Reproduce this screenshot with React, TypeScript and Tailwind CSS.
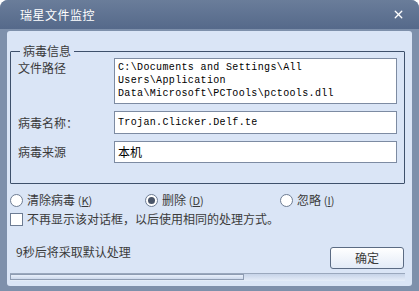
import { X } from 'lucide-react';

const cjk = { fontFamily: '"Noto Sans CJK SC", "Noto Sans", sans-serif' };
const mono = { fontFamily: '"Liberation Mono", "Noto Sans CJK SC", monospace' };

function Radio({ checked, label, hotkey }: { checked?: boolean; label: string; hotkey: string }) {
  return (
    <label className="flex items-center gap-[4px]">
      <span className="w-[13px] h-[13px] rounded-full border border-[#6d7c93] bg-white flex items-center justify-center">
        {checked && <span className="w-[7px] h-[7px] rounded-full bg-[#4a5568]" />}
      </span>
      <span className="text-[12px] leading-[16px] text-[#3b3b3b]">
        {label} <span className="text-[11px]">(<span className="underline">{hotkey}</span>)</span>
      </span>
    </label>
  );
}

export default function App() {
  return (
    <div className="w-[419px] h-[291px] bg-[#7e90ab] rounded-t-[8px] flex flex-col overflow-hidden" style={cjk}>
      {/* Title */}
      <div className="h-[29px] flex items-center justify-between pl-[20px] pr-[14px] bg-gradient-to-b from-[#6a7d9a] to-[#55698a]">
        <span className="text-white text-[12px] tracking-[0.5px]">瑞星文件监控</span>
        <X size={13} strokeWidth={2.5} className="text-white" />
      </div>

      {/* Client */}
      <div className="flex-1 mx-[7px] mb-[5px] mt-[2px] bg-[#dae5f6] rounded-[3px] px-[3px] pt-[13px] flex flex-col">
        {/* Group box */}
        <fieldset className="border border-[#3e506b] rounded-[1px] px-[7px] pb-[20px] pt-0 mr-[4px]">
          <legend className="text-[12px] text-[#3b3b3b] px-[3px] ml-[2px] leading-[14px]">病毒信息</legend>
          <div className="grid grid-cols-[96px_1fr] gap-y-[7px] text-[12px] text-[#3b3b3b]">
            <span className="pt-[1px]">文件路径</span>
            <div className="h-[46px] border border-[#7d8ba2] bg-white px-[3px] pt-[2px] text-[10px] tracking-[0.35px] leading-[13px] text-black" style={mono}>
              C:\Documents and Settings\All<br />Users\Application<br />Data\Microsoft\PCTools\pctools.dll
            </div>
            <span className="self-center pt-[1px]">病毒名称：</span>
            <div className="h-[23px] border border-[#7d8ba2] bg-white px-[3px] flex items-center text-[10px] tracking-[0.35px] text-black" style={mono}>
              Trojan.Clicker.Delf.te
            </div>
            <span className="self-center">病毒来源</span>
            <div className="h-[22px] border border-[#7d8ba2] bg-white px-[3px] flex items-center text-[12px] text-black">
              本机
            </div>
          </div>
        </fieldset>

        {/* Actions */}
        <div className="grid grid-cols-[135px_135px_1fr] mt-[8px]">
          <Radio label="清除病毒" hotkey="K" />
          <Radio label="删除" hotkey="D" checked />
          <Radio label="忽略" hotkey="I" />
        </div>
        <label className="flex items-center gap-[4px] mt-[3px]">
          <span className="w-[13px] h-[13px] border border-[#6d7c93] bg-white" />
          <span className="text-[12px] leading-[16px] text-[#3b3b3b]">不再显示该对话框，以后使用相同的处理方式。</span>
        </label>

        <div className="flex items-start justify-between mt-[20px] pl-[6px] pr-[5px]">
          <span className="text-[12px] leading-[16px] -mt-[3px] text-[#3b3b3b]">9秒后将采取默认处理</span>
          <button className="w-[74px] h-[22px] border border-[#5b6b83] rounded-[3px] bg-gradient-to-b from-white to-[#e3ebf7] text-[12px] text-[#3b3b3b]">
            确定
          </button>
        </div>

        {/* Progress */}
        <div className="mt-[4px] mr-[4px] h-[8px] border-t border-[#9aa8bd] bg-gradient-to-b from-[#c7d4e8] to-[#e5edf9] flex">
          <div className="w-[234px] h-[6px] border border-[#8e9cb2] bg-gradient-to-b from-[#e9f0fb] to-[#cdd9ec]" />
        </div>
      </div>
    </div>
  );
}
